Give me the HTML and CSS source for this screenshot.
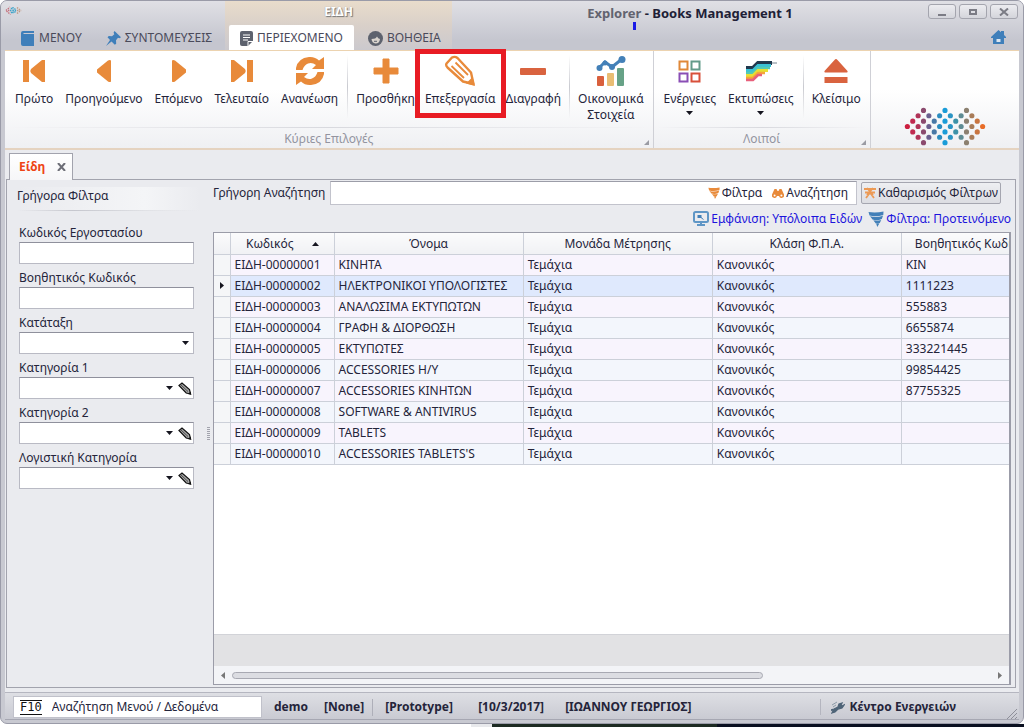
FILE: index.html
```html
<!DOCTYPE html>
<html lang="el">
<head>
<meta charset="utf-8">
<meta name="viewport" content="width=device-width, initial-scale=1">
<title>Explorer - Books Management 1</title>
<link rel="stylesheet" href="styles.css">
</head>
<body>
<svg class="defs" aria-hidden="true">
  <symbol id="dots" viewBox="0 0 16 8">
    <g fill="none" stroke-width="0.96" stroke-linecap="round">
      <path stroke="#cc1f3f" d="M1 4h0"/>
      <path stroke="#c02a50" d="M2 3h0M2 5h0"/>
      <path stroke="#b03358" d="M3 2h0M3 4h0M3 6h0"/>
      <path stroke="#8b4a6e" d="M4 1h0M4 3h0M4 5h0M4 7h0"/>
      <path stroke="#6a5f8e" d="M5 2h0M5 4h0M5 6h0"/>
      <path stroke="#4878a6" d="M6 3h0M6 5h0"/>
      <path stroke="#2b8cbf" d="M7 2h0M7 4h0M7 6h0"/>
      <path stroke="#1a9cd8" d="M8 1h0M8 3h0M8 5h0M8 7h0"/>
      <path stroke="#2a94c4" d="M9 2h0M9 4h0M9 6h0"/>
      <path stroke="#3d92a8" d="M10 3h0M10 5h0"/>
      <path stroke="#5f8c94" d="M11 2h0M11 4h0M11 6h0"/>
      <path stroke="#8c8070" d="M12 1h0M12 3h0M12 5h0M12 7h0"/>
      <path stroke="#a97c58" d="M13 2h0M13 4h0M13 6h0"/>
      <path stroke="#c97540" d="M14 3h0M14 5h0"/>
      <path stroke="#e86d28" d="M15 4h0"/>
    </g>
  </symbol>
  <symbol id="down" viewBox="0 0 7 4"><path d="M0 0h7L3.500 4z" fill="#15151f"/></symbol>
  <symbol id="pencil-small" viewBox="0 0 14 13">
    <path d="M1 3.500L4 1 11.500 7.500l1 4.500-4.300-1z" fill="#a5a5a5" stroke="#111" stroke-width="1.200"/>
    <path d="M2.500 2.500l7.500 7" stroke="#333" stroke-width=".8"/><path d="M10 12l3.300.7-.7-3.200z" fill="#111"/>
  </symbol>
  <symbol id="funnel" viewBox="0 0 16 16">
    <path d="M.5 1Q8 2 15.500.5L15.300 4Q8 6.300 1.500 4.600zM2 5.300Q8 7 15 4.800L13.800 8Q9 10 4.500 8.600zM5.300 9.300Q9 10.400 13.200 9L11.800 12Q10 13 7.800 12.500zM8.300 13.100L11.200 12.800 9.300 16z" fill="currentColor"/>
  </symbol>
</svg>

<div class="window">
  <header class="top">
    <div class="top-left">
      <div class="brand"><svg width="17" height="9" viewBox="0 0 17 9"><g fill="none" stroke-width="1.400" stroke-dasharray="1.400 1"><path d="M1 4.500l4-3.500M1.500 5l4 3.500M3 4.500h3" stroke="#c4707c"/><path d="M6 2l5 5M6 7l5-5M5 4.500h7M8 1v7" stroke="#3fa3c9"/><path d="M12 1.500l4 3M12 7.500l4-3M12 4.500h3" stroke="#c09a84"/></g></svg></div>
      <nav class="tabs">
        <button class="tab"><svg width="14" height="15" viewBox="0 0 14 15"><path d="M2 0h11v2H2.500v1H13v12H2Q0 15 0 13V2Q0 0 2 0z" fill="#3f7fba"/></svg>ΜΕΝΟΥ</button>
        <button class="tab"><svg width="15" height="15" viewBox="0 0 15 15"><path d="M8.500 0L15 6.300l-1.500.9-1.500-.4-2 2.400.2 3.500-1.400 1.100L5.500 10.500 0 15l4-6L1.500 6.200 2.800 5l3.200.2L8.300 3.300 7.600 1.500z" fill="#3f7fba"/></svg>ΣΥΝΤΟΜΕΥΣΕΙΣ</button>
      </nav>
    </div>
    <div class="context">
      <div class="context-title">ΕΙΔΗ</div>
      <nav class="tabs">
        <button class="tab active"><svg width="13" height="15" viewBox="0 0 13 15"><path d="M2 0h9q2 0 2 2v8l-5 5H2q-2 0-2-2V2q0-2 2-2z" fill="#5d626e"/><path d="M3 4h7M3 6.500h7M3 9h5M8 15v-4.500h5" stroke="#fff" fill="none"/></svg>ΠΕΡΙΕΧΟΜΕΝΟ</button>
        <button class="tab"><svg width="15" height="15" viewBox="0 0 15 15"><circle cx="7.500" cy="7.500" r="7.500" fill="#5d626e"/><path d="M3.500 8Q8 8 9 5.500 10 7.500 12 8 11.500 12.500 7.500 12.500 4 12 3.500 8z" fill="#d9d4ce"/><path d="M6 10.300h3" stroke="#5d626e"/></svg>ΒΟΗΘΕΙΑ</button>
      </nav>
    </div>
    <div class="top-right">
      <div class="titlebar">
        <h1 class="title"><span class="app">Explorer</span> - Books Management 1<i class="marker"></i></h1>
        <div class="controls">
          <button aria-label="Minimize"><svg width="10" height="8"><path d="M1 7h8" stroke="#7b7c85" stroke-width="2"/></svg></button>
          <button aria-label="Maximize"><svg width="10" height="8"><path d="M2 2h6v4H2z" fill="none" stroke="#7b7c85" stroke-width="2"/></svg></button>
          <button aria-label="Close"><svg width="10" height="8"><path d="M1 .5l8 7M9 .5l-8 7" stroke="#7b7c85" stroke-width="2"/></svg></button>
        </div>
      </div>
      <a href="#" class="home" aria-label="Home"><svg width="15" height="14" viewBox="0 0 15 14"><path d="M7.500 0L10 2.300V1h3v4l2 2v1h-2v6H2V8H0V7z" fill="#3f7fba"/><path d="M5.500 9h4v3h-4z" fill="#dce6f0"/></svg></a>
    </div>
  </header>

  <section class="ribbon">
    <div class="group">
      <div class="tools">
        <button class="tool"><svg width="24" height="24" viewBox="0 0 24 24"><path d="M1 1h6v22H1zM23 1v22h-3L9 14q-1.500-2 0-4L20 1z" fill="#e88a3a"/></svg>Πρώτο</button>
        <button class="tool"><svg width="24" height="24" viewBox="0 0 24 24"><path d="M19 1.500v21q-1 1-3 0L5 13.500v-3l11-9q2-1 3 0z" fill="#e88a3a"/></svg>Προηγούμενο</button>
        <button class="tool"><svg width="24" height="24" viewBox="0 0 24 24"><path d="M5 1.500v21q1 1 3 0l11-9v-3l-11-9q-2-1-3 0z" fill="#e88a3a"/></svg>Επόμενο</button>
        <button class="tool"><svg width="24" height="24" viewBox="0 0 24 24"><path d="M23 1h-6v22h6zM1 1v22h3l11-9q1.500-2 0-4L4 1z" fill="#e88a3a"/></svg>Τελευταίο</button>
        <button class="tool"><svg width="30" height="30" viewBox="0 0 30 30"><g fill="#e88a3a"><path id="swirl" d="M1 12Q3 2 14 1q6-.5 10 3.500L29 1v12H17l4-4Q17 6 13 7.500 9 9 7.500 14H1z"/><use href="#swirl" transform="rotate(180 15 15)"/></g></svg>Ανανέωση</button>
        <span class="sep"></span>
        <button class="tool"><svg width="26" height="26" viewBox="0 0 26 26"><path d="M10 1h6v9h9v6h-9v9h-6v-9H1v-6h9z" fill="#e88a3a" stroke="#e88a3a" stroke-linejoin="round"/></svg>Προσθήκη</button>
        <button class="tool marked"><svg width="32" height="32" viewBox="0 0 32 32"><g fill="none" stroke="#e88a3a" stroke-width="2.400" stroke-linejoin="round"><path d="M2.500 8.500L8 2.500q3-1.500 5.500.5L27 17.500l2.500 11.500L19 26.500 3.500 12.500q-2-2-1-4z"/><path d="M11.500 7.500L24 20M7.500 11L20 23" stroke-width="1.800"/></g><path d="M31 31l-9-2.500 6.500-6.500z" fill="#e88a3a"/></svg>Επεξεργασία</button>
        <button class="tool"><svg width="26" height="26" viewBox="0 0 26 26"><rect x="0" y="10" width="26" height="7" rx="1" fill="#d9633f"/></svg>Διαγραφή</button>
        <span class="sep"></span>
        <button class="tool"><svg width="30" height="30" viewBox="0 0 30 30"><path d="M3 12l6-6 7 5 10-8" fill="none" stroke="#4380b8" stroke-width="3"/><g fill="#4380b8"><circle cx="3.500" cy="12" r="3"/><circle cx="9" cy="7" r="2.500"/><circle cx="16" cy="11" r="3"/><circle cx="26" cy="3.500" r="3.500"/></g><rect x="1" y="20" width="7" height="10" rx="1" fill="#d9603d"/><rect x="11" y="17" width="7" height="13" rx="1" fill="#e9bd74"/><rect x="21" y="12" width="7" height="18" rx="1" fill="#67a287"/></svg>Οικονομικά<br>Στοιχεία</button>
      </div>
      <div class="caption">Κύριες Επιλογές<svg width="5" height="5"><path d="M5 0v5H0z" fill="#9a9ba3"/></svg></div>
    </div>
    <div class="group">
      <div class="tools">
        <button class="tool"><svg width="23" height="23" viewBox="0 0 23 23"><g fill="none" stroke-width="2"><path d="M1.500 1.500h8v8h-8z" stroke="#e08838"/><path d="M13.500 1.500h8v8h-8z" stroke="#639b8a"/><path d="M1.500 13.500h8v8h-8z" stroke="#8a4eb5"/><path d="M13.500 13.500h8v8h-8z" stroke="#d8503a"/></g></svg>Ενέργειες<svg class="drop"><use href="#down"/></svg></button>
        <button class="tool"><svg width="32" height="22" viewBox="0 0 32 22"><g fill="none"><path d="M1 8h7l5-5h14" stroke="#21384d" stroke-width="4"/><path d="M27 3h5" stroke="#74828e" stroke-width="1"/><path d="M1 10.500h7l5-5h13" stroke="#39c1d5" stroke-width="3"/><path d="M1 13h7l5-5h12" stroke="#54c9b2" stroke-width="2.500"/><path d="M1 15.500h7l5-5h10" stroke="#e7df32" stroke-width="3"/><path d="M1 18h7l5-5h7" stroke="#f5a53b" stroke-width="2.500"/><path d="M1 20h7l5-5h4" stroke="#e8607b" stroke-width="2.500"/></g></svg>Εκτυπώσεις<svg class="drop"><use href="#down"/></svg></button>
        <span class="sep"></span>
        <button class="tool"><svg width="24" height="26" viewBox="0 0 24 26"><path d="M10.500 2q1.500-2 3 0L23.500 13q.5 1-.5 1.500H1Q0 14 .5 13zM.5 19h23v6H.5z" fill="#d9633f"/></svg>Κλείσιμο</button>
      </div>
      <div class="caption">Λοιποί<svg width="5" height="5"><path d="M5 0v5H0z" fill="#9a9ba3"/></svg></div>
    </div>
    <div class="logo"><svg width="86" height="43"><use href="#dots"/></svg></div>
  </section>

  <main class="workspace">
    <div class="doc-tabs">
      <div class="doc-tab"><span>Είδη</span><button aria-label="Κλείσιμο καρτέλας"><svg width="9" height="8"><path d="M1 0l7 8M8 0L1 8" stroke="#6d6e77" stroke-width="2"/></svg></button></div>
    </div>
    <div class="doc">
      <aside class="filters">
        <h2>Γρήγορα Φίλτρα</h2>
        <div class="field"><label for="f1">Κωδικός Εργοστασίου</label><div class="box"><input id="f1" type="text"></div></div>
        <div class="field"><label for="f2">Βοηθητικός Κωδικός</label><div class="box"><input id="f2" type="text"></div></div>
        <div class="field"><label for="f3">Κατάταξη</label><div class="box"><div class="combo"><select id="f3"><option></option></select><svg><use href="#down"/></svg></div></div></div>
        <div class="field"><label for="f4">Κατηγορία 1</label><div class="box"><div class="combo"><select id="f4"><option></option></select><svg><use href="#down"/></svg></div><button aria-label="Επεξεργασία"><svg width="14" height="13"><use href="#pencil-small"/></svg></button></div></div>
        <div class="field"><label for="f5">Κατηγορία 2</label><div class="box"><div class="combo"><select id="f5"><option></option></select><svg><use href="#down"/></svg></div><button aria-label="Επεξεργασία"><svg width="14" height="13"><use href="#pencil-small"/></svg></button></div></div>
        <div class="field"><label for="f6">Λογιστική Κατηγορία</label><div class="box"><div class="combo"><select id="f6"><option></option></select><svg><use href="#down"/></svg></div><button aria-label="Επεξεργασία"><svg width="14" height="13"><use href="#pencil-small"/></svg></button></div></div>
      </aside>
      <div class="splitter"><span></span></div>
      <section class="content">
        <div class="search">
          <label for="q">Γρήγορη Αναζήτηση</label>
          <div class="search-box">
            <input id="q" type="text">
            <button class="orange"><svg width="12" height="12"><use href="#funnel"/></svg>Φίλτρα</button>
            <button><svg width="12" height="11" viewBox="0 0 12 11"><path d="M2.500 1h2l1 2h1l1-2h2l2.500 5.500a2.500 2.500 0 1 1-5 1.500h-2a2.500 2.500 0 1 1-5-1.500z" fill="#e88a3a"/><circle cx="2.600" cy="7.600" r="1" fill="#fff"/><circle cx="9.400" cy="7.600" r="1" fill="#fff"/></svg>Αναζήτηση</button>
          </div>
          <button class="clear"><svg width="12" height="12" viewBox="0 0 12 12"><path d="M0 2h12M1 5.500h10M2 11l4-5.500L10 11M3 1l6 7M9 1L3 8" stroke="#ec9a55" stroke-width="1.800" fill="none"/></svg>Καθαρισμός Φίλτρων</button>
        </div>
        <div class="links">
          <a href="#"><svg width="16" height="15" viewBox="0 0 16 15"><rect x="1" y="1" width="14" height="10" rx="1.500" fill="none" stroke="#5f96c6" stroke-width="2"/><path d="M8 11v2.500M4 14h8" stroke="#5f96c6" stroke-width="2"/><path d="M4.500 4h4v3h-4z" fill="#4380b8"/><path d="M8 6.500l2.500 2" stroke="#4380b8"/></svg>Εμφάνιση: Υπόλοιπα Ειδών</a>
          <a href="#"><svg width="16" height="16"><use href="#funnel"/></svg>Φίλτρα: Προτεινόμενο</a>
        </div>
        <div class="grid">
          <div class="grid-view">
            <table>
              <colgroup><col class="c-mark"><col class="c-code"><col class="c-wide"><col class="c-wide"><col class="c-wide"><col class="c-wide"></colgroup>
              <thead><tr><th></th><th><span class="sorted">Κωδικός<svg width="7" height="4"><path d="M0 4h7L3.500 0z" fill="#15151f"/></svg></span></th><th>Όνομα</th><th>Μονάδα Μέτρησης</th><th>Κλάση Φ.Π.Α.</th><th class="start">Βοηθητικός Κωδικός</th></tr></thead>
              <tbody>
                <tr><td></td><td>ΕΙΔΗ-00000001</td><td>ΚΙΝΗΤΑ</td><td>Τεμάχια</td><td>Κανονικός</td><td>KIN</td></tr>
                <tr class="selected"><td><svg width="4" height="7"><path d="M0 0v7l4-3.500z" fill="#15151f"/></svg></td><td>ΕΙΔΗ-00000002</td><td>ΗΛΕΚΤΡΟΝΙΚΟΙ ΥΠΟΛΟΓΙΣΤΕΣ</td><td>Τεμάχια</td><td>Κανονικός</td><td>1111223</td></tr>
                <tr><td></td><td>ΕΙΔΗ-00000003</td><td>ΑΝΑΛΩΣΙΜΑ ΕΚΤΥΠΩΤΩΝ</td><td>Τεμάχια</td><td>Κανονικός</td><td>555883</td></tr>
                <tr><td></td><td>ΕΙΔΗ-00000004</td><td>ΓΡΑΦΗ &amp; ΔΙΟΡΘΩΣΗ</td><td>Τεμάχια</td><td>Κανονικός</td><td>6655874</td></tr>
                <tr><td></td><td>ΕΙΔΗ-00000005</td><td>ΕΚΤΥΠΩΤΕΣ</td><td>Τεμάχια</td><td>Κανονικός</td><td>333221445</td></tr>
                <tr><td></td><td>ΕΙΔΗ-00000006</td><td>ACCESSORIES Η/Υ</td><td>Τεμάχια</td><td>Κανονικός</td><td>99854425</td></tr>
                <tr><td></td><td>ΕΙΔΗ-00000007</td><td>ACCESSORIES ΚΙΝΗΤΩΝ</td><td>Τεμάχια</td><td>Κανονικός</td><td>87755325</td></tr>
                <tr><td></td><td>ΕΙΔΗ-00000008</td><td>SOFTWARE &amp; ANTIVIRUS</td><td>Τεμάχια</td><td>Κανονικός</td><td></td></tr>
                <tr><td></td><td>ΕΙΔΗ-00000009</td><td>TABLETS</td><td>Τεμάχια</td><td>Κανονικός</td><td></td></tr>
                <tr><td></td><td>ΕΙΔΗ-00000010</td><td>ACCESSORIES TABLETS'S</td><td>Τεμάχια</td><td>Κανονικός</td><td></td></tr>
              </tbody>
            </table>
          </div>
          <div class="grid-footer"></div>
          <div class="scrollbar">
            <svg width="4" height="7"><path d="M4 0v7L0 3.500z" fill="#777"/></svg>
            <div class="track"><div class="thumb"></div></div>
            <svg width="4" height="7"><path d="M0 0v7l4-3.500z" fill="#777"/></svg>
          </div>
        </div>
      </section>
    </div>
  </main>

  <footer class="status">
    <div class="menu-search"><label for="cmd" class="key">F10</label><input id="cmd" type="text" value="Αναζήτηση Μενού / Δεδομένα"></div>
    <span>demo</span><span>[None]</span><i class="bar"></i><span class="cell">[Prototype]</span><span class="cell">[10/3/2017]</span><span>[ΙΩΑΝΝΟΥ ΓΕΩΡΓΙΟΣ]</span>
    <button class="actions"><svg width="14" height="13" viewBox="0 0 14 13"><path d="M1 12l3-1 3-3 4-1 2-3-2 1-1-1 1-2-3 1-1 3-4 2-3 1 2 1z" fill="#4f6478" stroke="#4f6478" stroke-width="1.300"/><path d="M1 4l5-3M2 6l3-2" stroke="#8d9ba8"/></svg>Κέντρο Ενεργειών</button>
    <svg class="grip" width="10" height="10"><path d="M0 10L10 0M4 10l6-6M8 10l2-2" stroke="#8e8f99"/></svg>
  </footer>
</div>
<div class="desktop"></div>
</body>
</html>
```
FILE: styles.css
```css
*, *::before, *::after { box-sizing: border-box; }
body {
  margin: 0;
  min-height: 100vh;
  display: flex;
  flex-direction: column;
  background: #fff;
  color: #24243a;
  font: 12px/16px "Noto Sans", sans-serif;
}
button, input, select { font: inherit; color: inherit; background: none; border: 0; padding: 0; margin: 0; }
h1, h2 { font-size: 12px; line-height: 16px; margin: 0; }
svg { flex: none; }
.defs { position: absolute; width: 0; height: 0; }

.window {
  flex: 1;
  display: flex;
  flex-direction: column;
  background: #c8c9d1;
  border: 1px solid #9a9ba8;
  border-radius: 7px;
  padding: 0 4px 3px;
}

.top { display: flex; height: 49px; background: linear-gradient(#e0e0e5, #c5c6cf 80%); margin: 0 -4px; padding: 0 4px; border-radius: 6px 6px 0 0; }
.top-left { width: 220px; display: flex; flex-direction: column; }
.brand { flex: 1; padding: 5px 0 0; line-height: 9px; }
.tabs { display: flex; height: 25px; }
.tab { display: flex; align-items: center; gap: 4px; padding: 1px 11px 0; color: #4a4a5a; white-space: nowrap; }
.top-left .tabs { padding-left: 5px; gap: 2px; }
.context { width: 227px; background: linear-gradient(#e9dccb, #d9d0c9 50%, #cbc9ce); display: flex; flex-direction: column; }
.context-title { flex: 1; text-align: center; line-height: 22px; font-weight: 700; color: #fff; text-shadow: 1px 1px 1px #777, 0 0 1px #999; }
.context .tabs { padding-left: 4px; gap: 3px; }
.tab.active { background: #fff; border-radius: 2px 2px 0 0; }
.top-right { flex: 1; display: flex; flex-direction: column; }
.titlebar { display: flex; height: 25px; }
.title { flex: 1; text-align: center; font-size: 13px; line-height: 24px; color: #202036; position: relative; }
.app { color: #62636f; }
.marker { position: absolute; left: 38%; top: 21px; width: 3px; height: 8px; background: #1a1ae6; }
.controls { display: flex; gap: 3px; padding-top: 3px; padding-right: 1px; }
.controls button { width: 28px; height: 15px; border: 1px solid #a4a5ae; border-radius: 3px; background: linear-gradient(#ececf0, #d4d5db); display: flex; align-items: center; justify-content: center; }
.home { align-self: flex-end; padding: 4px 13px 0 0; }

.ribbon { display: flex; height: 100px; background: linear-gradient(#fff 40%, #eff0f3); border-top: 1px solid #ecd3b0; border-bottom: 2px solid #e5d3c0; }
.group { display: flex; flex-direction: column; border-right: 1px solid #cfd0d6; padding: 0 4px; }
.tools { display: flex; flex: 1; }
.tool { display: grid; grid-template-rows: 32px auto; justify-items: center; align-content: start; row-gap: 4px; padding: 4px 6px 0; white-space: nowrap; position: relative; }
.tool > svg:first-child { margin: auto; }
.tool .drop { width: 7px; height: 4px; }
.marked::after { content: ""; position: absolute; left: -5px; right: -5px; top: -2px; height: 69px; border: 5px solid #e81c24; }
.sep { width: 1px; margin: 4px 3px 8px; background: linear-gradient(transparent, #c9cad0, transparent); }
.sep ~ .tool { padding: 4px 5px 0; }
.caption { height: 21px; text-align: center; color: #9394a0; line-height: 24px; position: relative; background: linear-gradient(90deg, transparent, #d8d9de, transparent) top / 100% 1px no-repeat; }
.caption svg { position: absolute; right: 0; bottom: 3px; }
.logo { flex: 1; display: flex; justify-content: center; align-items: flex-end; }

.workspace { flex: 1; display: flex; flex-direction: column; background: #eaebef; padding: 0 3px 4px 1px; }
.doc-tabs { display: flex; padding: 3px 3px 0; }
.doc-tab { display: flex; align-items: center; gap: 12px; height: 27px; margin-bottom: -1px; padding: 0 6px 0 9px; background: linear-gradient(#fff, #f6f6f8); border: 1px solid #a2a3ad; border-bottom: 0; color: #ee4415; font-weight: 700; position: relative; }
.doc-tab button { display: flex; }
.doc { flex: 1; display: flex; border: 1px solid #a2a3ad; min-width: 0; }
.filters { width: 197px; padding: 7px 10px 0 12px; }
.filters h2 { font-weight: 400; height: 24px; margin: 0 -6px 12px -2px; padding-top: 1px; background: linear-gradient(90deg, transparent, #c6c7ce 30%, transparent) bottom / 100% 1px no-repeat, linear-gradient(90deg, transparent, #f4f5f7 70%, transparent); }
.field { margin-bottom: 4px; }
.field label { display: block; height: 19px; line-height: 20px; }
.box { display: flex; height: 22px; background: #fff; border: 1px solid #b9bac4; border-top-color: #8f909c; }
.box input { flex: 1; min-width: 0; padding: 0 4px; }
.combo { flex: 1; position: relative; display: flex; }
.combo select { flex: 1; appearance: none; padding: 0 14px 0 4px; }
.combo svg { position: absolute; right: 4px; top: 8px; width: 7px; height: 4px; pointer-events: none; }
.box button { width: 16px; display: flex; align-items: center; justify-content: center; }
.splitter { width: 9px; display: flex; align-items: center; justify-content: center; }
.splitter span { width: 3px; height: 14px; background: repeating-linear-gradient(#a2a3ad 0 1px, transparent 1px 2px); }

.content { flex: 1; min-width: 0; display: flex; flex-direction: column; padding: 1px 4px 2px 0; }
.search { display: flex; align-items: center; gap: 4px; height: 24px; padding-right: 10px; white-space: nowrap; }
.search-box { flex: 1; display: flex; gap: 10px; height: 24px; margin-left: 1px; padding-right: 8px; background: #fff; border: 1px solid #c2c3cc; border-top-color: #9c9da8; }
.search-box input { flex: 1; min-width: 0; padding: 0 4px; }
.search-box button, .clear { display: flex; align-items: center; gap: 2px; }
.orange svg { color: #e88a3a; }
.clear { height: 22px; padding: 0 2px; border: 1px solid #a5a6b0; border-radius: 2px; background: linear-gradient(#eeeff2, #dcdde2); }
.links { display: flex; justify-content: flex-end; gap: 6px; height: 27px; align-items: center; white-space: nowrap; overflow: hidden; }
.links a { display: flex; align-items: center; gap: 2px; color: #1c14dc; text-decoration: none; }
.links svg { color: #4380b8; }

.grid { flex: 1; display: flex; flex-direction: column; border: solid #9b9ca8; border-width: 1px 2px 1px 1px; background: #fff; min-width: 0; }
.grid-view { flex: 1; overflow: hidden; }
table { border-collapse: collapse; table-layout: fixed; width: 877px; }
.c-mark { width: 16px; }
.c-code { width: 104px; }
.c-wide { width: 189px; }
th, td { height: 21px; padding: 1px 4px 0; border-right: 1px solid #ccd0d9; border-bottom: 1px solid #ccd0d9; text-align: left; white-space: nowrap; }
th { font-weight: 400; text-align: center; background: linear-gradient(#fbfbfc, #f0f1f4); }
th.start { text-align: left; padding-left: 13px; }
.sorted { display: flex; align-items: center; justify-content: flex-end; gap: 18px; padding-right: 11px; }
tbody tr:nth-child(odd) { background: #f8f4fd; }
tbody tr:nth-child(even) { background: #f3f6fc; }
tbody tr.selected { background: #dfe9fd; }
tbody td:first-child { background: #f5f6f8; padding: 0 0 0 6px; }
tbody td svg { display: block; }
.grid-footer { height: 32px; background: #e2e2e4; border-top: 1px solid #d2d3d8; }
.scrollbar { display: flex; align-items: center; gap: 7px; height: 18px; padding: 0 7px; background: #f3f4f7; }
.track { flex: 1; }
.thumb { width: 70%; height: 7px; border: 1px solid #a8a9b2; border-radius: 4px; background: #dcdde2; }

.status { display: flex; align-items: center; height: 28px; padding: 2px 2px 0 8px; gap: 16px; background: linear-gradient(#dedfe4, #c9cad2); border-top: 1px solid #b5b6c0; border-bottom: 1px solid #a6a7b2; font-weight: 700; white-space: nowrap; }
.menu-search { width: 249px; height: 22px; margin-right: -4px; display: flex; align-items: center; gap: 10px; padding: 0 6px; background: #fff; border: 1px solid #c0c1ca; font-weight: 400; }
.menu-search input { flex: 1; min-width: 0; }
.key { font: 12px/13px "DejaVu Sans Mono", monospace; color: #111; border-top: 1px solid #111; border-bottom: 1px solid #111; }
.bar { width: 1px; height: 17px; margin: 0 -8px; background: #aeafb9; }
.cell { min-width: 76px; text-align: center; }
.actions { display: flex; align-items: center; gap: 5px; margin-left: auto; margin-right: 35px; padding-left: 10px; border-left: 1px solid #b4b5bf; font-weight: 700; }
.grip { align-self: flex-end; }
.desktop { height: 3px; background: linear-gradient(90deg, #fff 46%, #e8e9ec 46% 48%, #1c2a22 48% 70%, #0a1020 70%); }
```
